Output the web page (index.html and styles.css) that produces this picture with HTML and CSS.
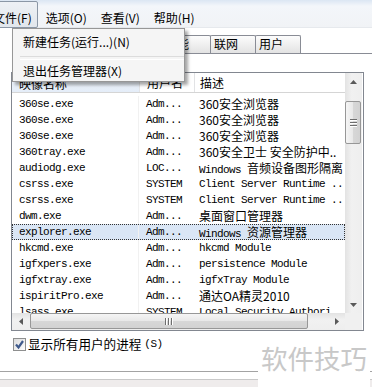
FILE: index.html
```html
<!DOCTYPE html>
<html lang="zh-CN">

<head>
    <meta charset="UTF-8">
    <title>Windows 任务管理器</title>
    <link rel="stylesheet" href="styles.css">
</head>

<body>
    <div class="window">
        <div class="menubar">
            <span class="menu open">文件(F)</span>
            <span class="menu">选项(O)</span>
            <span class="menu">查看(V)</span>
            <span class="menu">帮助(H)</span>
        </div>

        <div class="tabs">
            <span class="tab tab-wide">应用程序</span>
            <span class="tab">进程</span>
            <span class="tab">服务</span>
            <span class="tab tab-perf">性能</span>
            <span class="tab">联网</span>
            <span class="tab">用户</span>
        </div>

        <div class="panel">
            <div class="list">
                <div class="view">
                    <div class="head">
                        <span class="c1 sorted">映像名称</span>
                        <span class="c2">用户名</span>
                        <span class="c3">描述</span>
                    </div>
                    <div class="body">
                        <div class="row"><span class="c1">360se.exe</span><span class="c2">Adm...</span><span class="c3"><span class="zh">360安全浏览器</span></span></div>
                        <div class="row"><span class="c1">360se.exe</span><span class="c2">Adm...</span><span class="c3"><span class="zh">360安全浏览器</span></span></div>
                        <div class="row"><span class="c1">360se.exe</span><span class="c2">Adm...</span><span class="c3"><span class="zh">360安全浏览器</span></span></div>
                        <div class="row"><span class="c1">360tray.exe</span><span class="c2">Adm...</span><span class="c3"><span class="zh">360安全卫士 安全防护中..</span></span></div>
                        <div class="row"><span class="c1">audiodg.exe</span><span class="c2">LOC...</span><span class="c3">Windows <span class="zh">音频设备图形隔离</span></span></div>
                        <div class="row"><span class="c1">csrss.exe</span><span class="c2">SYSTEM</span><span class="c3">Client Server Runtime ..</span></div>
                        <div class="row"><span class="c1">csrss.exe</span><span class="c2">SYSTEM</span><span class="c3">Client Server Runtime ..</span></div>
                        <div class="row"><span class="c1">dwm.exe</span><span class="c2">Adm...</span><span class="c3"><span class="zh">桌面窗口管理器</span></span></div>
                        <div class="row selected"><span class="c1">explorer.exe</span><span class="c2">Adm...</span><span class="c3">Windows <span class="zh">资源管理器</span></span></div>
                        <div class="row"><span class="c1">hkcmd.exe</span><span class="c2">Adm...</span><span class="c3">hkcmd Module</span></div>
                        <div class="row"><span class="c1">igfxpers.exe</span><span class="c2">Adm...</span><span class="c3">persistence Module</span></div>
                        <div class="row"><span class="c1">igfxtray.exe</span><span class="c2">Adm...</span><span class="c3">igfxTray Module</span></div>
                        <div class="row"><span class="c1">ispiritPro.exe</span><span class="c2">Adm...</span><span class="c3"><span class="zh">通达OA精灵2010</span></span></div>
                        <div class="row"><span class="c1">lsass.exe</span><span class="c2">SYSTEM</span><span class="c3">Local Security Authori..</span></div>
                    </div>
                </div>

                <div class="vscroll">
                    <span class="arrow">
                        <svg width="7" height="4" viewBox="0 0 7 4"><polygon points="0,4 3.5,0 7,4" fill="#5a5a5a" /></svg>
                    </span>
                    <span class="vtrack"><span class="vthumb"><i></i><i></i><i></i></span></span>
                    <span class="arrow">
                        <svg width="7" height="4" viewBox="0 0 7 4"><polygon points="0,0 3.5,4 7,0" fill="#5a5a5a" /></svg>
                    </span>
                </div>

                <div class="hscroll">
                    <span class="arrow">
                        <svg width="4" height="7" viewBox="0 0 4 7"><polygon points="4,0 0,3.5 4,7" fill="#5a5a5a" /></svg>
                    </span>
                    <span class="htrack"><span class="hthumb"><i></i><i></i><i></i></span></span>
                    <span class="arrow">
                        <svg width="4" height="7" viewBox="0 0 4 7"><polygon points="0,0 4,3.5 0,7" fill="#5a5a5a" /></svg>
                    </span>
                </div>

                <div class="corner"></div>
            </div>

            <label class="check">
                <span class="box">
                    <svg width="11" height="11" viewBox="0 0 11 11"><polyline points="2,5.5 4.5,8.5 9,2" fill="none" stroke="#3f5a8c" stroke-width="2.2" /></svg>
                </span>
                <span>显示所有用户的进程</span><span class="key">(S)</span>
            </label>
        </div>

        <div class="statusbar"></div>

        <!-- open File menu -->
        <div class="dropdown">
            <div class="item">新建任务(运行...)(N)</div>
            <div class="sep"></div>
            <div class="item">退出任务管理器(X)</div>
        </div>

        <div class="watermark">软件技巧</div>
    </div>
</body>

</html>
```

FILE: styles.css
```css
* {
    box-sizing: border-box;
}

body {
    margin: 0;
    background: #fff;
    color: #000;
    font-family: 'Noto Sans CJK SC', sans-serif;
    font-size: 12px;
}

.window {
    position: relative;
    width: 372px;
    height: 387px;
    overflow: hidden;
}

.menubar {
    display: flex;
    gap: 2px;
    height: 28px;
    margin-left: -13px;
    background: linear-gradient(#dbe6f3 0, #f3f6fa 6px, #f1f3f6 100%);
    border-bottom: 1px solid #e6e9ed;
}

.menu {
    height: 27px;
    margin-top: 1px;
    padding: 5px 5px 0;
    border: 1px solid transparent;
    line-height: 21px;
    white-space: nowrap;
}

.menu.open {
    border-color: #8b97a6;
    border-radius: 2px;
    background: linear-gradient(#eef1f5, #e1e6ec);
}

.tabs {
    display: flex;
    height: 19px;
    margin: 7px 0 0 12px;
    padding-left: 2px;
    border-bottom: 1px solid #898c95;
}

.tab {
    width: 46px;
    height: 18px;
    margin-right: -1px;
    padding-left: 3px;
    border: 1px solid #898c95;
    border-bottom: 0;
    border-radius: 2px 2px 0 0;
    background: linear-gradient(#fcfcfc, #e3e3e3);
    line-height: 16px;
}

.tab-wide {
    width: 58px;
}

.tab-perf {
    width: 50px;
}

.panel {
    height: 318px;
    padding: 18px 8px 0 11px;
    border-bottom: 1px solid #a3a3a3;
}

.list {
    display: grid;
    grid-template-columns: 333px 17px;
    grid-template-rows: 240px 17px;
    width: 353px;
    border: 1px solid #828790;
}

.view {
    overflow: hidden;
}

.head {
    display: flex;
    height: 20px;
    border-bottom: 1px solid #d5d5d5;
    line-height: 19px;
}

.head .c1 {
    padding-top: 1px;
}

.head .sorted {
    background: linear-gradient(#f3f7fc, #e4edf8);
}

.head .c2,
.head .c3 {
    border-left: 1px solid #e2e3e5;
}

.head .c3 {
    padding-left: 5px;
}

.body {
    padding-top: 3px;
}

.row {
    display: flex;
    height: 16px;
    font-family: 'Liberation Mono', monospace;
    font-size: 11px;
    letter-spacing: -0.6px;
    line-height: 16px;
    white-space: nowrap;
}

.row.selected {
    background: #dae6f5;
    outline: 1px dotted #333;
    outline-offset: -1px;
}

.c1,
.c2,
.c3 {
    overflow: hidden;
    white-space: nowrap;
}

.c1 {
    width: 127px;
    padding-left: 7px;
}

.row .c1 {
    border-right: 1px solid #f1f1f1;
}

.c2 {
    width: 55px;
    padding-left: 7px;
}

.c3 {
    flex: 1;
    padding-left: 5px;
}

.zh {
    font-family: 'Noto Sans CJK SC', sans-serif;
    font-size: 12px;
    letter-spacing: 0;
}

/* scroll bars */
.vscroll {
    display: flex;
    flex-direction: column;
    background: linear-gradient(to right, #e3e3e3, #f1f1f1 40%, #eeeeee);
}

.hscroll {
    display: flex;
    background: linear-gradient(#e3e3e3, #f1f1f1 40%, #eeeeee);
}

.arrow {
    display: flex;
    align-items: center;
    justify-content: center;
    flex: 0 0 17px;
    height: 17px;
}

.vtrack {
    flex: 1;
}

.vthumb,
.hthumb {
    display: flex;
    align-items: center;
    justify-content: center;
    gap: 1px;
    border: 1px solid #979797;
    border-radius: 2px;
}

.vthumb {
    flex-direction: column;
    width: 16px;
    height: 43px;
    margin: 11px 0 0 0;
    background: linear-gradient(to right, #f5f5f5, #e8e8e8 50%, #d7d7d7 51%, #d2d2d2);
}

.vthumb i {
    width: 7px;
    height: 1px;
    background: #6e6e6e;
    box-shadow: 0 1px 0 #fff;
    margin-bottom: 1px;
}

.htrack {
    flex: 1;
}

.hthumb {
    width: 278px;
    height: 16px;
    margin-left: 1px;
    background: linear-gradient(#f5f5f5, #e8e8e8 50%, #d7d7d7 51%, #d2d2d2);
}

.hthumb i {
    width: 1px;
    height: 7px;
    background: #6e6e6e;
    box-shadow: 1px 0 0 #fff;
    margin-right: 1px;
}

.corner {
    background: #f0f0f0;
}

.check {
    display: flex;
    align-items: center;
    gap: 2px;
    height: 14px;
    margin: 6px 0 0 2px;
    font-size: 12.6px;
    line-height: 14px;
}

.box {
    display: flex;
    align-items: center;
    justify-content: center;
    width: 13px;
    height: 13px;
    border: 1px solid #8e8f8f;
    background: linear-gradient(135deg, #dcdcdc, #fdfdfd);
}

.key {
    margin-left: 1px;
    font-family: 'Liberation Mono', monospace;
    font-size: 11px;
    letter-spacing: -0.5px;
}

.statusbar {
    height: 15px;
    margin-top: 7px;
    border-top: 1px solid #c9c9c9;
    background: #efecec;
}

/* File menu, dropped down over the window */
.dropdown {
    position: absolute;
    top: 28px;
    left: 12px;
    width: 173px;
    padding-top: 3px;
    border: 1px solid #979797;
    background: #f5f5f5;
    box-shadow: 3px 3px 3px rgba(0, 0, 0, 0.35);
}

.item {
    height: 20px;
    padding-left: 10px;
    line-height: 20px;
    white-space: nowrap;
}

.sep {
    height: 9px;
    margin-left: 7px;
    padding-top: 4px;
}

.sep::before {
    content: '';
    display: block;
    height: 2px;
    border-top: 1px solid #dcdcdc;
    border-bottom: 1px solid #fff;
}

.watermark {
    position: absolute;
    top: 339px;
    left: 258px;
    padding: 0 3px 10px 3px;
    background: #fff;
    color: #c8c8c8;
    font-size: 26.5px;
    line-height: 38px;
    white-space: nowrap;
}
```
